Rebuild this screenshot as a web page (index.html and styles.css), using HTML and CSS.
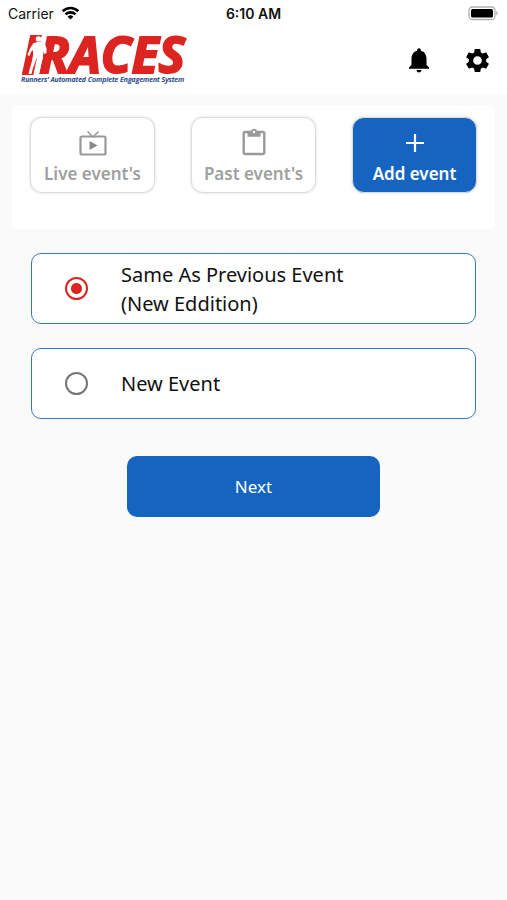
FILE: index.html
```html
<!DOCTYPE html>
<html lang="en">
<head>
    <meta charset="UTF-8">
    <meta name="viewport" content="width=device-width, initial-scale=1.0">
    <title>iRaces - Add event</title>
    <link rel="stylesheet" href="styles.css">
</head>

<body>
    <div class="status-bar">
        <div class="carrier">
            <span>Carrier</span>
            <svg width="19" height="14" viewBox="0 0 18 14" fill="none" stroke="#000" stroke-width="2.6">
                <path d="M1.2 5.2a11.2 11.2 0 0 1 15.6 0"/>
                <path d="M4 8.4a7.2 7.2 0 0 1 10 0"/>
                <path d="M9 13.4L6.1 10.7a4.2 4.2 0 0 1 5.8 0z" fill="#000" stroke="none"/>
            </svg>
        </div>
        <div class="time">6:10 AM</div>
        <div class="battery">
            <svg width="31" height="15" viewBox="0 0 31 15">
                <rect x="1" y="1" width="26" height="12.5" rx="3.5" fill="#fff" stroke="#b0b0b0" stroke-width="1.3"/>
                <rect x="3" y="3" width="22" height="8.5" rx="1.5" fill="#000"/>
                <path d="M28.3 5v4.5c2-.7 2-3.8 0-4.5z" fill="#b0b0b0"/>
            </svg>
        </div>
    </div>

    <header class="header">
        <a class="logo" href="#" aria-label="iRaces home">
            <svg width="172" height="66" viewBox="0 0 172 66">
                <text class="logo-name" x="3" y="46"><tspan class="logo-initial">I</tspan>RACES</text>
                <!-- runner -->
                <g fill="#fff">
                    <circle cx="18.5" cy="12" r="2.8"/>
                    <path d="M13 16.500l4-1.500h4l4 2 1.500 4v5l-2.500 1-.5-5-1 4 .5 5-1.500 5-1 5-1.500 6h-2l.5-7 .5-5-1.500-4-2 6-1.500 4-1.500 6h-3l2-8 1.500-5 1-6v-5l-2 2-1.500 4-2-1 2-5.500z"/>
                </g>
                <text class="logo-tagline" x="1" y="55">Runners’ Automated Complete Engagement System</text>
            </svg>
        </a>
        <div class="header-actions">
            <button class="icon-button" aria-label="Notifications">
                <svg width="30" height="30" viewBox="0 0 24 24"><path d="M12 22c1.1 0 2-.9 2-2h-4c0 1.1.89 2 2 2zm6-6v-5c0-3.07-1.64-5.64-4.5-6.32V4c0-.83-.67-1.5-1.5-1.5s-1.5.67-1.5 1.5v.68C7.63 5.36 6 7.92 6 11v5l-2 2v1h16v-1l-2-2z"/></svg>
            </button>
            <button class="icon-button" aria-label="Settings">
                <svg width="29" height="29" viewBox="0 0 24 24"><path d="M19.14 12.94c.04-.3.06-.61.06-.94 0-.32-.02-.64-.07-.94l2.03-1.58c.18-.14.23-.41.12-.61l-1.92-3.32c-.12-.22-.37-.29-.59-.22l-2.39.96c-.5-.38-1.03-.7-1.62-.94l-.36-2.54c-.04-.24-.24-.41-.48-.41h-3.84c-.24 0-.43.17-.47.41l-.36 2.54c-.59.24-1.13.57-1.62.94l-2.39-.96c-.22-.08-.47 0-.59.22L2.74 8.87c-.12.21-.08.47.12.61l2.03 1.58c-.05.3-.09.63-.09.94s.02.64.07.94l-2.03 1.58c-.18.14-.23.41-.12.61l1.92 3.32c.12.22.37.29.59.22l2.39-.96c.5.38 1.03.7 1.62.94l.36 2.54c.05.24.24.41.48.41h3.84c.24 0 .44-.17.47-.41l.36-2.54c.59-.24 1.13-.56 1.62-.94l2.39.96c.22.08.47 0 .59-.22l1.92-3.32c.12-.22.07-.47-.12-.61l-2.01-1.58zM12 15.6c-1.98 0-3.6-1.62-3.6-3.6s1.62-3.6 3.6-3.6 3.6 1.62 3.6 3.6-1.62 3.6-3.6 3.6z"/></svg>
            </button>
        </div>
    </header>

    <main>
        <nav class="tabs">
            <button class="tab">
                <svg width="30" height="28" viewBox="0 0 30 28">
                    <path d="M9.5 2.5l5.5 5.500 5.500-5.500" fill="none" stroke="#999" stroke-width="1.5"/>
                    <rect x="2.5" y="7.5" width="25" height="18" rx="1.5" fill="none" stroke="#999" stroke-width="2.2"/>
                    <path d="M11.5 12v9l8-4.5z" fill="#888"/>
                </svg>
                <span>Live event's</span>
            </button>
            <button class="tab">
                <svg width="30" height="28" viewBox="0 0 30 28">
                    <rect x="4.7" y="3" width="20.6" height="22" rx="1.5" fill="none" stroke="#999" stroke-width="2.4"/>
                    <path d="M8.5 2.300h3.200a3.400 3.400 0 0 1 6.600 0h3.200v5.500h-13z" fill="#999"/>
                    <circle cx="15" cy="3" r="1.2" fill="#fff"/>
                </svg>
                <span>Past event's</span>
            </button>
            <button class="tab active">
                <svg width="30" height="28" viewBox="0 0 30 28"><path d="M15 5v18M6 14h18" stroke="#fff" stroke-width="2.2"/></svg>
                <span>Add event</span>
            </button>
        </nav>

        <form class="event-form">
            <label class="option">
                <input type="radio" name="event" value="previous" checked>
                <span>Same As Previous Event<br>(New Eddition)</span>
            </label>
            <label class="option">
                <input type="radio" name="event" value="new">
                <span>New Event</span>
            </label>
            <button class="next-button" type="button">Next</button>
        </form>
    </main>
</body>

</html>
```
FILE: styles.css
```css
* {
    box-sizing: border-box;
}

body {
    font-family: "Noto Sans", sans-serif;
    background-color: #fafafa;
    color: #111;
    margin: 0;
}

button {
    font-family: inherit;
    border: none;
    cursor: pointer;
}

svg {
    display: block;
    overflow: visible;
}

.status-bar {
    display: grid;
    grid-template-columns: 1fr auto 1fr;
    align-items: center;
    height: 26px;
    padding: 0 8px;
    background-color: #fff;
    font-family: Inter, sans-serif;
    font-size: 14px;
}

.carrier {
    display: flex;
    align-items: center;
    gap: 7px;
}

.time {
    font-weight: 600;
}

.battery {
    justify-self: end;
}

.header {
    display: flex;
    justify-content: space-between;
    align-items: center;
    height: 68px;
    padding: 0 14px 0 20px;
    background-color: #fff;
}

.logo-name {
    font-family: "Open Sans", sans-serif;
    font-size: 50px;
    font-weight: 700;
    font-style: italic;
    fill: #dc2420;
    stroke: #dc2420;
    stroke-width: 2px;
}

.logo-initial {
    stroke-width: 4px;
}

.logo-tagline {
    font-family: "Open Sans", sans-serif;
    font-size: 7px;
    font-weight: 600;
    font-style: italic;
    fill: #27488a;
    stroke: #27488a;
    stroke-width: 0.2px;
}

.header-actions {
    display: flex;
    gap: 26px;
}

.icon-button {
    display: flex;
    justify-content: center;
    align-items: center;
    width: 32px;
    height: 32px;
    padding: 0;
    background: none;
}

.tabs {
    display: grid;
    grid-template-columns: repeat(3, 1fr);
    gap: 36px;
    margin: 11px 12px 24px;
    padding: 12px 18px 36px;
    background-color: #fff;
    border-radius: 6px;
}

.tab {
    display: flex;
    flex-direction: column;
    align-items: center;
    height: 76px;
    padding: 11px 0 0;
    background-color: #fff;
    border: 1px solid #dcdcdc;
    border-radius: 12px;
    box-shadow: 0 0 3px #d8d8d8;
    color: #a0a0a0;
    font-size: 17px;
    font-weight: 600;
    line-height: 34px;
    white-space: nowrap;
}

.tab.active {
    background-color: #1565c0;
    color: #fff;
}

.event-form {
    display: flex;
    flex-direction: column;
    gap: 24px;
    margin: 0 31px;
}

.option {
    display: flex;
    align-items: center;
    gap: 33px;
    min-height: 71px;
    padding: 5px 33px;
    background-color: #fff;
    border: 1px solid #3478c4;
    border-radius: 10px;
    font-size: 20px;
    line-height: 29px;
    cursor: pointer;
}

.option input {
    appearance: none;
    flex: none;
    width: 23px;
    height: 23px;
    margin: 0;
    border: 2px solid #757575;
    border-radius: 50%;
}

.option input:checked {
    border-color: #dc2420;
    background: radial-gradient(circle, #dc2420 5px, #fff 6px);
}

.next-button {
    align-self: center;
    width: 57%;
    height: 61px;
    margin-top: 13px;
    background-color: #1565c0;
    border-radius: 10px;
    color: #fff;
    font-size: 17px;
}
```
